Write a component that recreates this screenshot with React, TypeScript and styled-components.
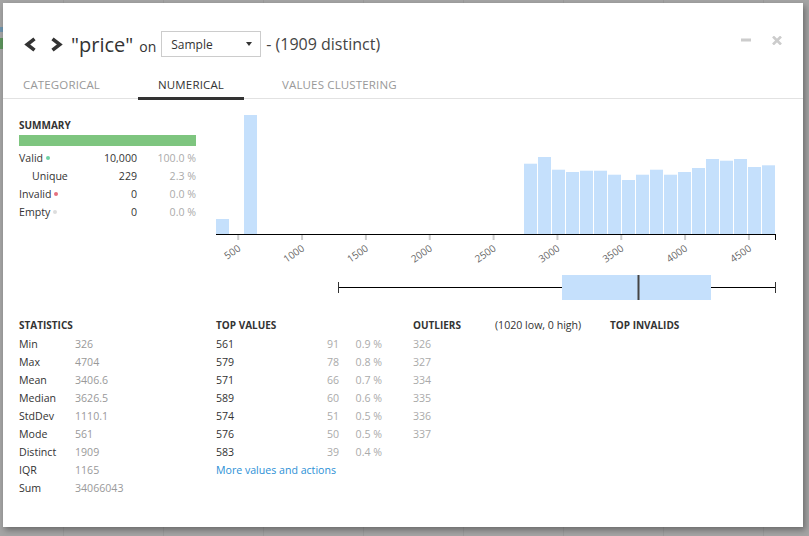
import React from "react";
import styled, { createGlobalStyle } from "styled-components";

const FONT = `"Open Sans", "Noto Sans", sans-serif`;

const GlobalStyle = createGlobalStyle`
  html, body { margin: 0; padding: 0; background: #a4a4a4; }
  body { font-family: ${FONT}; color: #333; }
  * { box-sizing: border-box; }
`;

const Backdrop = styled.div`
  width: 809px;
  height: 536px;
  overflow: hidden;
  padding: 3px 6px 9px 3px;
  background-color: #a4a4a4;
  background-image:
    linear-gradient(#5c935c, #5c935c),
    linear-gradient(#6d93ad, #6d93ad),
    repeating-linear-gradient(to right, transparent 0 63px, #9b9b9b 63px 64px, transparent 64px 100px);
  background-size: 3px 11px, 3px 5px, auto;
  background-position: 0 38px, 0 27px, 0 0;
  background-repeat: no-repeat, no-repeat, repeat;
`;

const Modal = styled.div`
  width: 800px;
  height: 524px;
  background: #fff;
  box-shadow: 2px 3px 6px rgba(0, 0, 0, 0.35);
  display: flex;
  flex-direction: column;
`;

const Header = styled.div`
  display: flex;
  align-items: center;
  height: 26px;
  margin-top: 28px;
  padding: 0 21px;
`;

const NavIcon = styled.svg<{ $gap: number }>`
  width: 13px;
  height: 15px;
  flex: none;
  margin-right: ${(p) => p.$gap}px;
`;

const Title = styled.span`
  font-size: 20px;
  color: #333;
  white-space: nowrap;
`;

const OnWord = styled.span`
  font-size: 14px;
  color: #333;
  margin: 4px 5px 0 6px;
`;

const SelectBox = styled.div`
  width: 100px;
  height: 26px;
  border: 1px solid #ccc;
  display: flex;
  align-items: center;
  justify-content: space-between;
  padding: 0 8px 0 9px;
  font-size: 12px;
  color: #333;
`;

const Caret = styled.span`
  width: 0;
  height: 0;
  border-left: 3.5px solid transparent;
  border-right: 3.5px solid transparent;
  border-top: 4px solid #333;
`;

const Distinct = styled.span`
  font-size: 16px;
  color: #444;
  margin-left: 5px;
  white-space: nowrap;
`;

const WindowIcons = styled.div`
  margin-left: auto;
  align-self: flex-start;
  margin-top: 5px;
  display: flex;
  gap: 21px;
`;

const TabBar = styled.div`
  display: flex;
  align-items: flex-start;
  gap: 18px;
  margin-top: 16px;
  height: 26px;
  border-bottom: 1px solid #e2e2e2;
`;

const Tab = styled.div<{ $active?: boolean }>`
  height: 27px;
  padding: 0 20px;
  line-height: 24px;
  font-size: 11.5px;
  letter-spacing: 0.15px;
  text-transform: uppercase;
  color: ${(p) => (p.$active ? "#333" : "#999")};
  border-bottom: 3px solid ${(p) => (p.$active ? "#333" : "transparent")};
  white-space: nowrap;
`;

const Body = styled.div`
  padding-left: 16px;
  flex: 1;
`;

const TopRow = styled.div`
  display: flex;
  align-items: flex-start;
`;

const Summary = styled.div`
  width: 177px;
  padding-top: 19px;
`;

const SectionTitle = styled.div`
  font-size: 10px;
  font-weight: 700;
  line-height: 14px;
  text-transform: uppercase;
  color: #333;
  white-space: nowrap;
`;

const GreenBar = styled.div`
  height: 11px;
  margin-top: 3px;
  background: #7ec57f;
`;

const Rows = styled.div`
  margin-top: 3px;
`;

const SummaryRow = styled.div`
  display: grid;
  grid-template-columns: 1fr 50px 59px;
  height: 18px;
  line-height: 18px;
  font-size: 10.6px;
`;

const RowLabel = styled.span<{ $indent?: boolean }>`
  display: flex;
  align-items: center;
  gap: 3px;
  padding-left: ${(p) => (p.$indent ? 13 : 0)}px;
  color: #333;
`;

const Dot = styled.span<{ $color: string }>`
  width: 4px;
  height: 4px;
  border-radius: 50%;
  background: ${(p) => p.$color};
`;

const Num = styled.span<{ $muted?: boolean }>`
  text-align: right;
  color: ${(p) => (p.$muted ? "#aaa" : "#333")};
`;

const ChartSvg = styled.svg`
  margin-left: 20px;
  margin-top: 6px;
  overflow: visible;
  flex: none;
  font-family: ${FONT};
`;

const BottomRow = styled.div`
  display: grid;
  grid-template-columns: repeat(4, 197px);
  margin-top: 13px;
`;

const Column = styled.div``;

const Table = styled.div<{ $cols: string }>`
  display: grid;
  grid-template-columns: ${(p) => p.$cols};
  grid-auto-rows: 18px;
  line-height: 18px;
  font-size: 10.6px;
  margin-top: 3px;
`;

const Cell = styled.span<{ $tone?: "dark" | "muted" | "light"; $right?: boolean }>`
  color: ${(p) => (p.$tone === "muted" ? "#999" : p.$tone === "light" ? "#aaa" : "#333")};
  text-align: ${(p) => (p.$right ? "right" : "left")};
  white-space: nowrap;
`;

const MoreLink = styled.a`
  display: block;
  font-size: 10.6px;
  line-height: 18px;
  color: #2b90d6;
  text-decoration: none;
`;

const HeadingLine = styled.div`
  display: grid;
  grid-template-columns: 82px auto;
  align-items: baseline;
`;

const HeadingNote = styled.span`
  font-size: 10.6px;
  line-height: 14px;
  color: #333;
`;

const bars: { bin: number; top: number }[] = [
  { bin: 0, top: 114 },
  { bin: 2, top: 10 },
  ...[58.7, 52, 64.7, 67, 65.7, 65.7, 69.7, 75, 69.7, 64.7, 69.7, 67, 63, 54, 55.7, 54, 62, 60.3].map(
    (top, i) => ({ bin: 22 + i, top })
  ),
];

const scale = (v: number) => ((v - 326) * 559) / 4378;
const ticks = [500, 1000, 1500, 2000, 2500, 3000, 3500, 4000, 4500];

const Histogram: React.FC = () => (
  <ChartSvg width={562} height={200} viewBox="0 0 562 200">
    {bars.map((b) => (
      <rect key={b.bin} x={b.bin * 14} y={b.top} width={13} height={129 - b.top} fill="#c5e0fc" />
    ))}
    <line x1={0} x2={560} y1={129.5} y2={129.5} stroke="#000" strokeWidth={1} />
    {ticks.map((t) => {
      const x = scale(t);
      return (
        <g key={t}>
          <line x1={x} x2={x} y1={130} y2={135} stroke="#ccc" strokeWidth={2} />
          <text
            x={0}
            y={0}
            transform={`translate(${x - 1}, 139) rotate(-35)`}
            textAnchor="end"
            dy="0.72em"
            fontSize={10}
            fill="#666"
          >
            {t}
          </text>
        </g>
      );
    })}
    <line x1={559.5} x2={559.5} y1={129} y2={135} stroke="#000" strokeWidth={1} />
    {/* box plot */}
    <line x1={122.5} x2={559.5} y1={182.5} y2={182.5} stroke="#000" strokeWidth={1} />
    <line x1={122.5} x2={122.5} y1={177} y2={188} stroke="#333" strokeWidth={1} />
    <line x1={559.5} x2={559.5} y1={177} y2={188} stroke="#333" strokeWidth={1} />
    <rect x={346} y={170} width={149} height={25} fill="#c5e0fc" />
    <line x1={422.5} x2={422.5} y1={170} y2={195} stroke="#444" strokeWidth={2} />
  </ChartSvg>
);

const stats: [string, string][] = [
  ["Min", "326"],
  ["Max", "4704"],
  ["Mean", "3406.6"],
  ["Median", "3626.5"],
  ["StdDev", "1110.1"],
  ["Mode", "561"],
  ["Distinct", "1909"],
  ["IQR", "1165"],
  ["Sum", "34066043"],
];

const topValues: [string, string, string][] = [
  ["561", "91", "0.9 %"],
  ["579", "78", "0.8 %"],
  ["571", "66", "0.7 %"],
  ["589", "60", "0.6 %"],
  ["574", "51", "0.5 %"],
  ["576", "50", "0.5 %"],
  ["583", "39", "0.4 %"],
];

const outliers = ["326", "327", "334", "335", "336", "337"];

export default function App() {
  return (
    <>
      <GlobalStyle />
      <Backdrop>
        <Modal>
          <Header>
            <NavIcon $gap={13} viewBox="0 0 13 15">
              <polyline points="10.5,1.8 3.2,7.5 10.5,13.2" fill="none" stroke="#333" strokeWidth={3.6} />
            </NavIcon>
            <NavIcon $gap={8} viewBox="0 0 13 15">
              <polyline points="2.5,1.8 9.8,7.5 2.5,13.2" fill="none" stroke="#333" strokeWidth={3.6} />
            </NavIcon>
            <Title>"price"</Title>
            <OnWord>on</OnWord>
            <SelectBox>
              <span>Sample</span>
              <Caret />
            </SelectBox>
            <Distinct>- (1909 distinct)</Distinct>
            <WindowIcons>
              <svg width="10" height="9" viewBox="0 0 10 9">
                <rect x="0" y="2.5" width="10" height="3" fill="#ccc" />
              </svg>
              <svg width="10" height="9" viewBox="0 0 10 9">
                <path d="M1 0.5 L9 8.5 M9 0.5 L1 8.5" stroke="#ccc" strokeWidth={2.6} />
              </svg>
            </WindowIcons>
          </Header>

          <TabBar>
            <Tab>Categorical</Tab>
            <Tab $active>Numerical</Tab>
            <Tab>Values clustering</Tab>
          </TabBar>

          <Body>
            <TopRow>
              <Summary>
                <SectionTitle>Summary</SectionTitle>
                <GreenBar />
                <Rows>
                  <SummaryRow>
                    <RowLabel>
                      Valid <Dot $color="#6fd1a5" />
                    </RowLabel>
                    <Num>10,000</Num>
                    <Num $muted>100.0 %</Num>
                  </SummaryRow>
                  <SummaryRow>
                    <RowLabel $indent>Unique</RowLabel>
                    <Num>229</Num>
                    <Num $muted>2.3 %</Num>
                  </SummaryRow>
                  <SummaryRow>
                    <RowLabel>
                      Invalid <Dot $color="#e7707d" />
                    </RowLabel>
                    <Num>0</Num>
                    <Num $muted>0.0 %</Num>
                  </SummaryRow>
                  <SummaryRow>
                    <RowLabel>
                      Empty <Dot $color="#dddddd" />
                    </RowLabel>
                    <Num>0</Num>
                    <Num $muted>0.0 %</Num>
                  </SummaryRow>
                </Rows>
              </Summary>
              <Histogram />
            </TopRow>

            <BottomRow>
              <Column>
                <SectionTitle>Statistics</SectionTitle>
                <Table $cols="56px auto">
                  {stats.map(([k, v]) => (
                    <React.Fragment key={k}>
                      <Cell>{k}</Cell>
                      <Cell $tone="muted">{v}</Cell>
                    </React.Fragment>
                  ))}
                </Table>
              </Column>
              <Column>
                <SectionTitle>Top values</SectionTitle>
                <Table $cols="94px 29px 43px">
                  {topValues.map(([v, c, p]) => (
                    <React.Fragment key={v}>
                      <Cell>{v}</Cell>
                      <Cell $tone="light" $right>
                        {c}
                      </Cell>
                      <Cell $tone="light" $right>
                        {p}
                      </Cell>
                    </React.Fragment>
                  ))}
                </Table>
                <MoreLink href="#">More values and actions</MoreLink>
              </Column>
              <Column>
                <HeadingLine>
                  <SectionTitle>Outliers</SectionTitle>
                  <HeadingNote>(1020 low, 0 high)</HeadingNote>
                </HeadingLine>
                <Table $cols="auto">
                  {outliers.map((o) => (
                    <Cell key={o} $tone="light">
                      {o}
                    </Cell>
                  ))}
                </Table>
              </Column>
              <Column>
                <SectionTitle>Top invalids</SectionTitle>
              </Column>
            </BottomRow>
          </Body>
        </Modal>
      </Backdrop>
    </>
  );
}
